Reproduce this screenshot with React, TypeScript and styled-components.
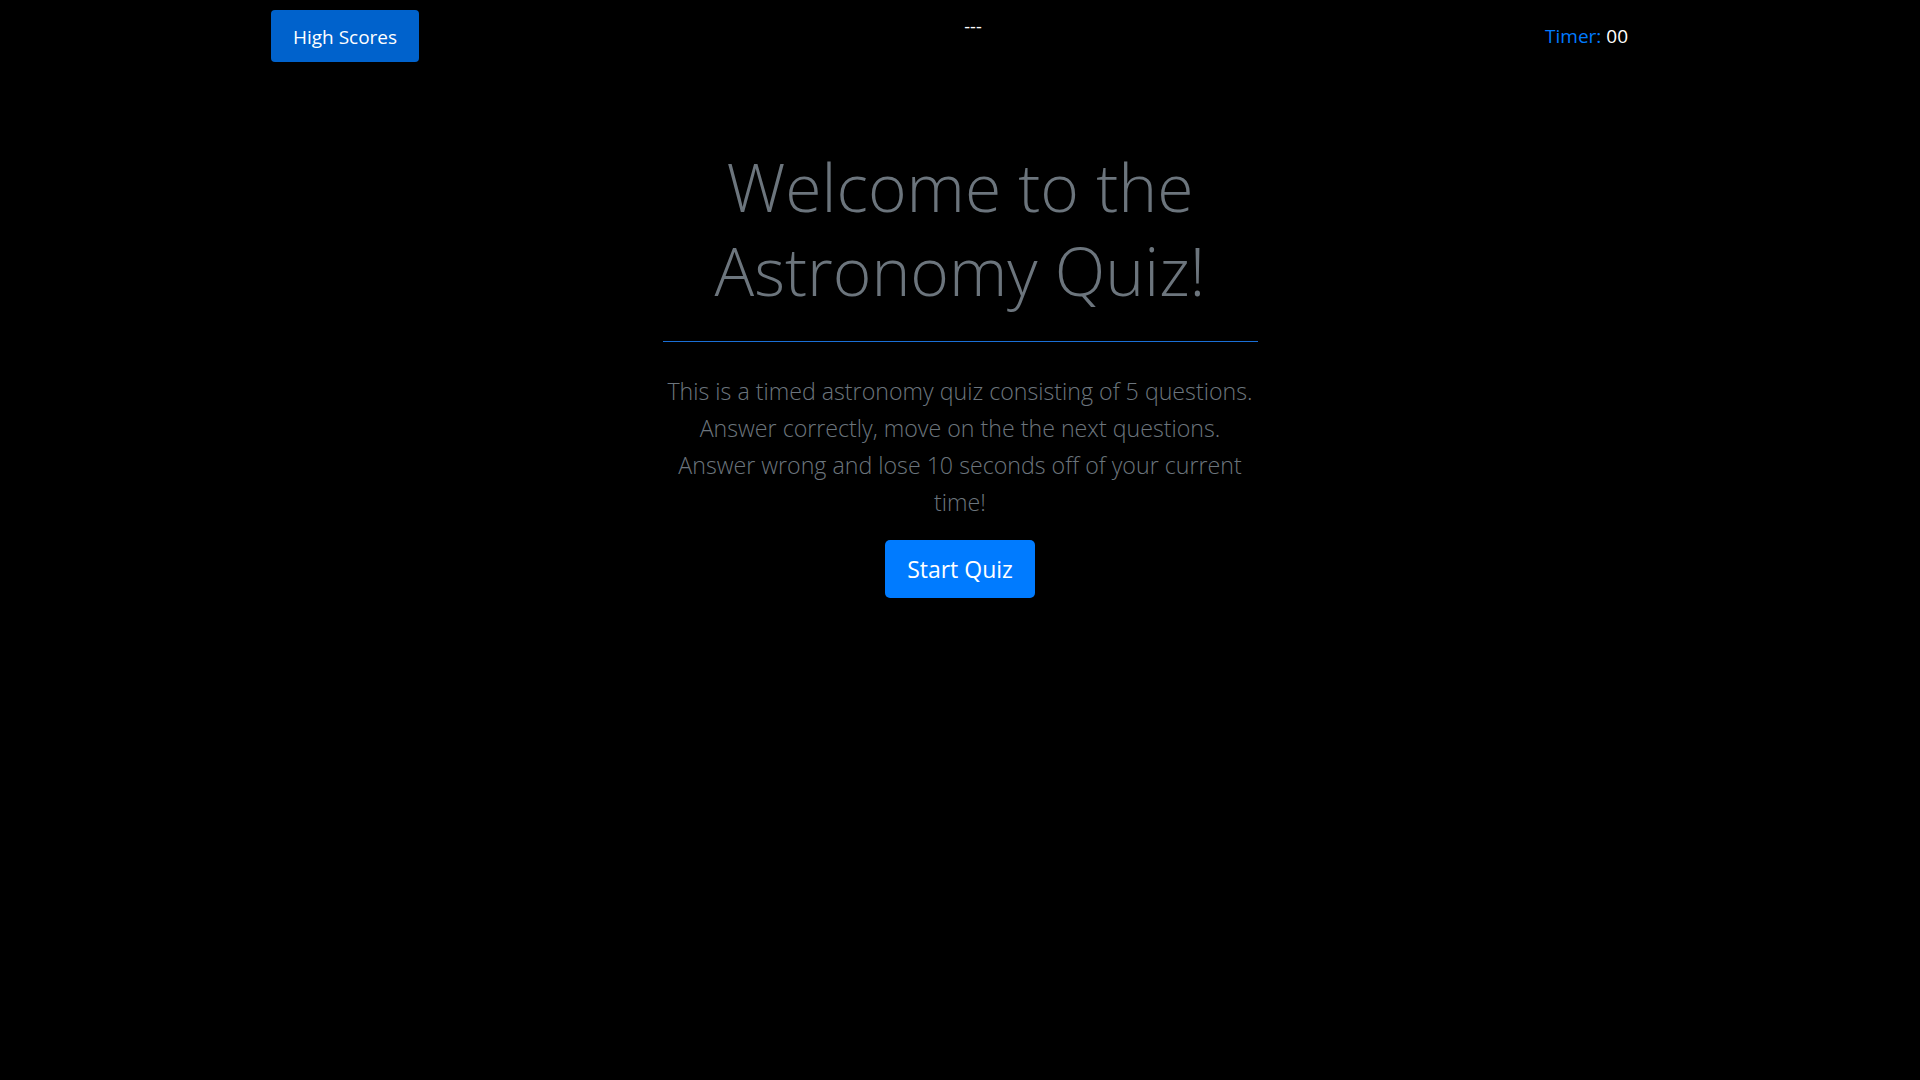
import React from "react";
import styled, { createGlobalStyle } from "styled-components";

const GlobalStyle = createGlobalStyle`
  html, body {
    margin: 0;
    padding: 0;
    background: #000;
  }
  body {
    font-family: "Open Sans", "Noto Sans", "Liberation Sans", sans-serif;
    color: #fff;
    min-height: 100vh;
  }
`;

const Page = styled.div`
  min-height: 100vh;
  background: #000;
`;

const Header = styled.header`
  width: 1378px;
  margin: 0 auto;
  padding-top: 10px;
  display: grid;
  grid-template-columns: 1fr auto 1fr;
  align-items: start;
`;

const ScoresButton = styled.button`
  justify-self: start;
  height: 52px;
  width: 148px;
  padding: 2px 0 0;
  border: none;
  border-radius: 4px;
  background: #0062cc;
  color: #fff;
  font-family: inherit;
  font-size: 19px;
  font-weight: 400;
  cursor: pointer;
`;

const Divider = styled.div`
  margin-top: 4px;
  padding-left: 26px;
  font-size: 18px;
  line-height: 24px;
  color: #fff;
`;

const Timer = styled.div`
  justify-self: end;
  margin-top: 11px;
  padding-right: 21px;
  font-size: 19px;
  line-height: 30px;
  color: #fff;
`;

const TimerLabel = styled.span`
  color: #007bff;
`;

const Main = styled.main`
  width: 595px;
  margin: 0 auto;
  padding-top: 82px;
  display: flex;
  flex-direction: column;
  align-items: center;
  text-align: center;
`;

const Title = styled.h1`
  margin: 0;
  font-size: 66px;
  font-weight: 300;
  line-height: 84px;
  color: #6c757d;
`;

const Rule = styled.hr`
  align-self: stretch;
  margin: 29px 0 0;
  height: 0;
  border: none;
  border-top: 1px solid #1a6fd6;
`;

const Lead = styled.p`
  margin: 31px 0 0;
  font-size: 23.2px;
  font-weight: 300;
  line-height: 37px;
  color: #6c757d;
`;

const StartButton = styled.button`
  margin-top: 19px;
  width: 150px;
  height: 58px;
  padding: 0;
  border: none;
  border-radius: 5px;
  background: #007bff;
  color: #fff;
  font-family: inherit;
  font-size: 23px;
  font-weight: 400;
  cursor: pointer;
`;

export default function App() {
  return (
    <Page>
      <GlobalStyle />
      <Header>
        <ScoresButton>High Scores</ScoresButton>
        <Divider>---</Divider>
        <Timer>
          <TimerLabel>Timer: </TimerLabel>00
        </Timer>
      </Header>
      <Main>
        <Title>
          Welcome to the
          <br />
          Astronomy Quiz!
        </Title>
        <Rule />
        <Lead>
          This is a timed astronomy quiz consisting of 5 questions.
          <br />
          Answer correctly, move on the the next questions.
          <br />
          Answer wrong and lose 10 seconds off of your current time!
        </Lead>
        <StartButton>Start Quiz</StartButton>
      </Main>
    </Page>
  );
}
